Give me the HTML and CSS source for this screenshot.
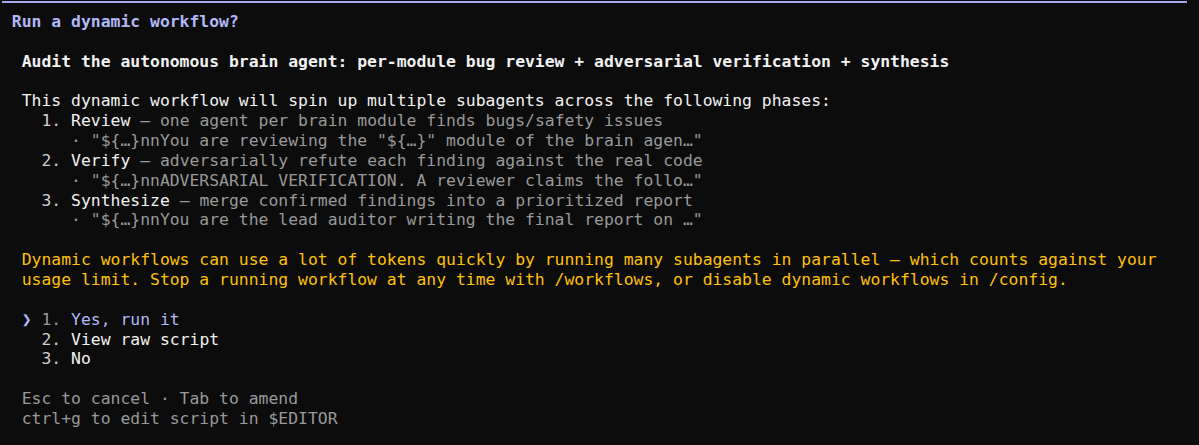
FILE: index.html
```html
<!DOCTYPE html>
<html lang="en">
<head>
<meta charset="utf-8">
<title>Run a dynamic workflow?</title>
<link rel="stylesheet" href="styles.css">
</head>
<body>
<div class="term">
  <div class="rule"></div>
  <div class="screen">
    <div class="ln title"> Run a dynamic workflow?</div>
    <div class="ln"> </div>
    <div class="ln strong">  Audit the autonomous brain agent: per-module bug review + adversarial verification + synthesis</div>
    <div class="ln"> </div>
    <div class="ln">  This dynamic workflow will spin up multiple subagents across the following phases:</div>
    <div class="ln">    <span class="num">1.</span> Review <span class="dim">— one agent per brain module finds bugs/safety issues</span></div>
    <div class="ln dim">       · "${…}nnYou are reviewing the "${…}" module of the brain agen…"</div>
    <div class="ln">    <span class="num">2.</span> Verify <span class="dim">— adversarially refute each finding against the real code</span></div>
    <div class="ln dim">       · "${…}nnADVERSARIAL VERIFICATION. A reviewer claims the follo…"</div>
    <div class="ln">    <span class="num">3.</span> Synthesize <span class="dim">— merge confirmed findings into a prioritized report</span></div>
    <div class="ln dim">       · "${…}nnYou are the lead auditor writing the final report on …"</div>
    <div class="ln"> </div>
    <div class="ln warn">  Dynamic workflows can use a lot of tokens quickly by running many subagents in parallel — which counts against your</div>
    <div class="ln warn">  usage limit. Stop a running workflow at any time with /workflows, or disable dynamic workflows in /config.</div>
    <div class="ln"> </div>
    <div class="ln sel">  <span class="caret">❯</span> <span class="num">1.</span> Yes, run it</div>
    <div class="ln">    <span class="num">2.</span> View raw script</div>
    <div class="ln">    <span class="num">3.</span> No</div>
    <div class="ln"> </div>
    <div class="ln dim">  Esc to cancel · Tab to amend</div>
    <div class="ln dim">  ctrl+g to edit script in $EDITOR</div>
  </div>
</div>
</body>
</html>
```

FILE: styles.css
```css
html, body {
  margin: 0;
  padding: 0;
  background: #0c0c0c;
}

body {
  width: 1199px;
  height: 445px;
  overflow: hidden;
}

.term {
  padding-left: 2px;
  font-family: "DejaVu Sans Mono", "Liberation Mono", monospace;
  font-size: 16.4px;
  color: #f2f2f2;
}

.rule {
  margin-top: 1px;
  width: 1185px;
  height: 2px;
  background: #a3a9ee;
}

.screen {
  padding-top: 9px;
}

.ln {
  white-space: pre;
  line-height: 19.85px;
  height: 19.85px;
}

.title {
  color: #b1b9f9;
  font-weight: bold;
}

.strong {
  font-weight: bold;
}

.dim {
  color: #999999;
}

.num {
  color: #cfcfcf;
}

.warn {
  color: #ffc107;
}

.sel {
  color: #b1b9f9;
}

.sel .num {
  color: #999999;
}

.caret {
  display: inline-block;
  width: 1ch;
  overflow: hidden;
  vertical-align: top;
}
```
